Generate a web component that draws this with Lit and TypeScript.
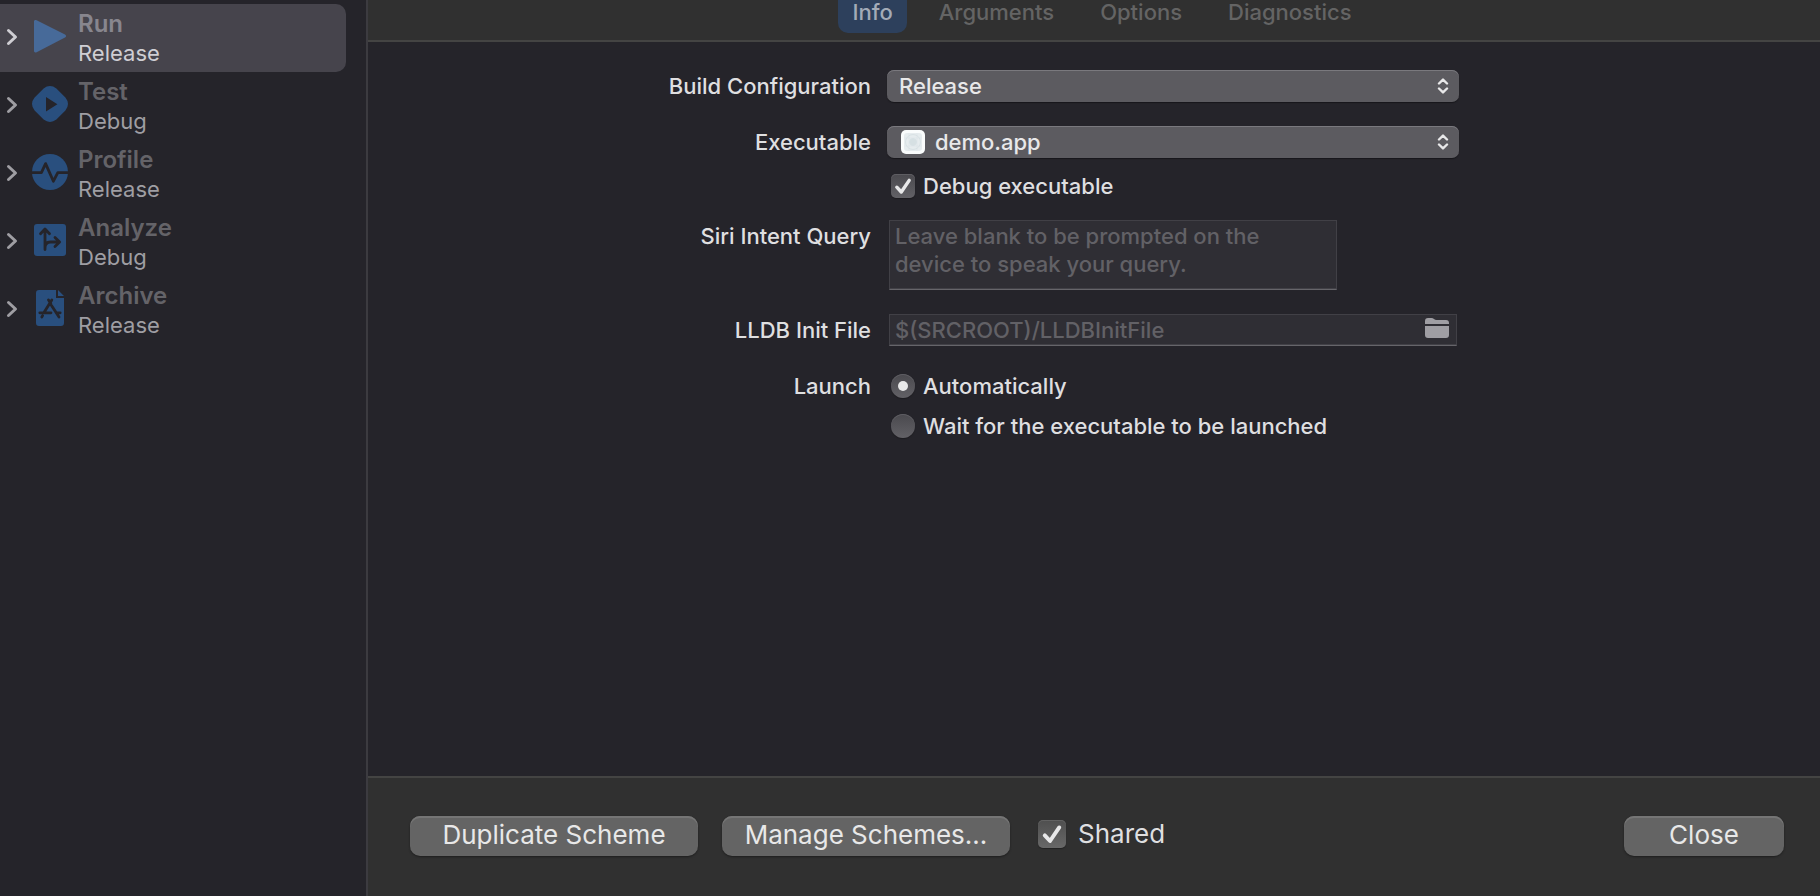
import { LitElement, html, svg, css, type TemplateResult } from "lit";
import { customElement, state } from "lit/decorators.js";
import { classMap } from "lit/directives/class-map.js";

interface SchemeAction {
  name: string;
  config: string;
  icon: TemplateResult;
}

const actions: SchemeAction[] = [
  {
    name: "Run",
    config: "Release",
    icon: svg`<path d="M4 3.6C4 2 5.2 1.5 6.6 2.2L35 16.4C36.4 17.2 36.4 18.8 35 19.6L6.6 34.2C5.2 34.9 4 34.4 4 32.8Z"/>`,
  },
  {
    name: "Test",
    config: "Debug",
    icon: svg`<path fill-rule="evenodd" d="M13.6 2.4Q20 -2.4 26.4 2.4L35.4 11.6Q40.600 18 35.400 24.400L26.400 33.600Q20 38.400 13.600 33.600L4.600 24.400Q-0.600 18 4.600 11.600ZM16 11V25.600L27.400 18.300Z"/>`,
  },
  {
    name: "Profile",
    config: "Release",
    icon: svg`<circle cx="20" cy="18" r="18"/><path class="cut" d="M1 18.600H11.400L15.600 9.600L23.400 27.200L27.800 18.600H39"/>`,
  },
  {
    name: "Analyze",
    config: "Debug",
    icon: svg`<rect x="4" y="2" width="32" height="32" rx="3"/><path class="cut" d="M15 27.500V7.500M10.500 11.800L15 7L19.500 11.800M15 26C15 21.500 17 20 20.500 20H29M25 15.500L29.600 20L25 24.500"/>`,
  },
  {
    name: "Archive",
    config: "Release",
    icon: svg`<path d="M9 0H26V8H34V33Q34 36 31 36H9Q6 36 6 33V3Q6 0 9 0ZM28 0L34 6H28Z"/><path class="cut" d="M18.500 10L20.800 13.600M21.800 10L14 22.500M9.800 22.800H21M26.500 22.800H30.200M21.500 15.500L29 27M12.600 25.600L11.800 27"/>`,
  },
];

const tabs = ["Info", "Arguments", "Options", "Diagnostics"];

const updown = html`<svg class="updown" viewBox="0 0 12 16" aria-hidden="true">
  <path d="M2 5.500L6 1.600L10 5.500M2 10.500L6 14.400L10 10.500" />
</svg>`;

const tick = html`<svg class="tick" viewBox="0 0 24 24" aria-hidden="true">
  <path d="M5.800 13.200L10.300 18L18.200 6.400" />
</svg>`;

@customElement("app-root")
export class AppRoot extends LitElement {
  @state() private action = 0;
  @state() private tab = 0;

  static styles = css`
    :host {
      display: grid;
      grid-template-columns: 368px minmax(0, 1fr);
      min-height: 100vh;
      background: #25242a;
      color: #dfdfe0;
      font: 500 22px/28px Inter, "Liberation Sans", sans-serif;
    }
    *,
    *::before {
      box-sizing: border-box;
    }
    button,
    input,
    select,
    textarea {
      margin: 0;
      padding: 0;
      border: 0;
      border-radius: 0;
      background: none;
      color: inherit;
      font: inherit;
    }
    svg {
      display: block;
    }
    .sidebar {
      border-right: 2px solid #3c3b40;
      padding: 4px 20px 4px 0;
    }
    .list {
      margin: 0;
      padding: 0;
      list-style: none;
    }
    .row {
      display: flex;
      align-items: center;
      width: 100%;
      height: 68px;
      padding: 0 8px 0 6px;
      border-radius: 0 10px 10px 0;
      text-align: left;
      color: #9f9ea3;
    }
    .row.on {
      background: #46444c;
      color: #cfced3;
    }
    .chevron {
      width: 12px;
      height: 18px;
      margin-bottom: 2px;
      fill: none;
      stroke: currentColor;
      stroke-width: 3;
      stroke-linecap: round;
      stroke-linejoin: round;
    }
    .glyph {
      width: 40px;
      height: 36px;
      margin: 0 8px 4px 12px;
      fill: #294f7e;
    }
    .row.on .glyph {
      fill: #476a99;
    }
    .cut {
      fill: none;
      stroke: #25242a;
      stroke-width: 2.8;
      stroke-linecap: round;
      stroke-linejoin: round;
    }
    .name {
      display: block;
      font-size: 24px;
      line-height: 30px;
      font-weight: 600;
      color: #646368;
    }
    .row.on .name {
      color: #88868e;
    }
    .config {
      display: block;
      font-weight: 400;
    }
    .main {
      display: flex;
      flex-direction: column;
      min-width: 0;
    }
    .tabs {
      display: flex;
      justify-content: center;
      gap: 18px;
      height: 42px;
      padding: 0 0 7px 16px;
      border-bottom: 2px solid #444443;
      background: #303030;
    }
    .tab {
      padding: 0 14px 9px;
      border-radius: 0 0 10px 10px;
      line-height: 24px;
      color: #646464;
    }
    .tab.on {
      background: #2d405c;
      color: #a3abb7;
    }
    .form {
      flex: 1;
      display: grid;
      grid-template-columns: 503fr 572fr 345fr;
      align-content: start;
      column-gap: 16px;
      padding-top: 28px;
    }
    .label {
      grid-column: 1;
      text-align: right;
      line-height: 32px;
    }
    .launch {
      line-height: 24px;
    }
    .field {
      grid-column: 2;
      min-width: 0;
    }
    .popup {
      display: grid;
      align-items: center;
      margin-bottom: 24px;
    }
    .popup > * {
      grid-area: 1 / 1;
    }
    .popup select {
      appearance: none;
      width: 100%;
      height: 32px;
      padding: 0 36px 0 12px;
      border-radius: 7px;
      background: #5c5b60;
      box-shadow: inset 0 1px #7a797e, 0 1px 1px #18171b;
      color: #e8e8e9;
    }
    .popup.app {
      margin-bottom: 16px;
    }
    .popup.app select {
      padding-left: 48px;
    }
    .updown {
      justify-self: end;
      width: 12px;
      height: 16px;
      margin-right: 10px;
      fill: none;
      stroke: #e8e8e9;
      stroke-width: 2.4;
      stroke-linecap: round;
      stroke-linejoin: round;
      pointer-events: none;
    }
    .appicon {
      width: 24px;
      height: 24px;
      margin-left: 14px;
      pointer-events: none;
    }
    .check {
      display: flex;
      align-items: center;
      gap: 8px;
      height: 24px;
      margin-left: 4px;
    }
    .box {
      display: grid;
      width: 24px;
      height: 24px;
    }
    .box > * {
      grid-area: 1 / 1;
      width: 100%;
      height: 100%;
    }
    .box input {
      appearance: none;
      border-radius: 5px;
      background: linear-gradient(#4a494e, #626166);
      box-shadow: inset 0 1px #5e5d62, 0 1px 1px #1c1b1f;
    }
    .tick {
      fill: none;
      stroke: #e8e8e9;
      stroke-width: 3.4;
      stroke-linecap: round;
      stroke-linejoin: round;
      pointer-events: none;
      visibility: hidden;
    }
    input:checked + .tick {
      visibility: visible;
    }
    .box input[type="radio"] {
      display: grid;
      place-items: center;
      border-radius: 50%;
    }
    .box input[type="radio"]:checked::before {
      content: "";
      width: 10px;
      height: 10px;
      border-radius: 50%;
      background: #e8e8e9;
    }
    .debug {
      margin-bottom: 22px;
    }
    .entry {
      border: 1px solid #414046;
      border-bottom-color: #66656a;
      background: #2f2e34;
      box-shadow: inset 0 -1px #414046;
    }
    ::placeholder {
      color: #626166;
      opacity: 1;
    }
    .query {
      display: block;
      width: calc(100% - 124px);
      height: 70px;
      margin: 0 0 24px 2px;
      padding: 1px 5px;
      resize: none;
      overflow: hidden;
    }
    .file {
      display: flex;
      align-items: center;
      height: 32px;
      margin: 0 2px 28px;
      padding: 0 7px 0 5px;
    }
    .file input {
      flex: 1;
      min-width: 0;
      height: 28px;
    }
    .folder {
      width: 24px;
      height: 20px;
      margin-bottom: 4px;
      fill: #9f9ea3;
    }
    .radios {
      display: grid;
      gap: 16px;
    }
    .footer {
      display: flex;
      align-items: center;
      gap: 24px;
      height: 120px;
      padding: 0 36px 2px 42px;
      border-top: 2px solid #444443;
      background: #303030;
      font-size: 26px;
      font-weight: 400;
    }
    .push {
      width: 288px;
      height: 40px;
      padding-bottom: 2px;
      border-radius: 10px;
      background: #646464;
      box-shadow: inset 0 2px #757575, 0 1px 2px #1e1e1e;
      color: #e8e8e8;
    }
    .close {
      width: 160px;
      margin-left: auto;
    }
    .shared {
      gap: 12px;
      height: 28px;
      margin-bottom: 4px;
    }
    .shared .box {
      width: 28px;
      height: 28px;
    }
    .shared .box input {
      background: linear-gradient(#4f4f4f, #686868);
      box-shadow: inset 0 1px #626262, 0 1px 1px #222;
    }
  `;

  render() {
    return html`
      <nav class="sidebar" aria-label="Scheme actions">
        <ul class="list">
          ${actions.map(
            (a, i) => html`<li>
              <button
                class=${classMap({ row: true, on: i === this.action })}
                @click=${() => (this.action = i)}
              >
                <svg class="chevron" viewBox="0 0 12 18" aria-hidden="true">
                  <path d="M2.500 2.500L9.500 9L2.500 15.500" />
                </svg>
                <svg class="glyph" viewBox="0 0 40 36" aria-hidden="true">${a.icon}</svg>
                <span>
                  <span class="name">${a.name}</span>
                  <span class="config">${a.config}</span>
                </span>
              </button>
            </li>`
          )}
        </ul>
      </nav>
      <main class="main">
        <div class="tabs" role="tablist">
          ${tabs.map(
            (t, i) => html`<button
              role="tab"
              aria-selected=${i === this.tab}
              class=${classMap({ tab: true, on: i === this.tab })}
              @click=${() => (this.tab = i)}
            >${t}</button>`
          )}
        </div>
        <form class="form">
          <label class="label" for="build">Build Configuration</label>
          <div class="field popup">
            <select id="build">
              <option>Release</option>
              <option>Debug</option>
            </select>
            ${updown}
          </div>

          <label class="label" for="exec">Executable</label>
          <div class="field popup app">
            <select id="exec">
              <option>demo.app</option>
            </select>
            <svg class="appicon" viewBox="0 0 24 24" aria-hidden="true">
              <rect width="24" height="24" rx="5" fill="#fafcfc" />
              <rect x="3" y="3" width="18" height="18" rx="3" fill="#e6ecee" />
              <g fill="none" stroke="#d9e2e5">
                <circle cx="12" cy="12" r="7.500" />
                <circle cx="12" cy="12" r="3.500" fill="#d6e0e3" />
                <path d="M3.500 8H20.500M3.500 16H20.500M8 3.500V20.500M16 3.500V20.500" stroke-opacity=".4" />
              </g>
            </svg>
            ${updown}
          </div>

          <label class="field check debug">
            <span class="box"><input type="checkbox" checked />${tick}</span>
            Debug executable
          </label>

          <label class="label" for="query">Siri Intent Query</label>
          <div class="field">
            <textarea
              id="query"
              class="entry query"
              placeholder="Leave blank to be prompted on the device to speak your query."
            ></textarea>
          </div>

          <label class="label" for="lldb">LLDB Init File</label>
          <div class="field">
            <div class="entry file">
              <input id="lldb" type="text" placeholder="$(SRCROOT)/LLDBInitFile" />
              <button type="button" aria-label="Choose file">
                <svg class="folder" viewBox="0 0 24 20" aria-hidden="true">
                  <path d="M0 6V3Q0 0 3 0H6.500Q8 0 9 1T11.500 2H21Q24 2 24 5V6ZM0 8H24V17Q24 20 21 20H3Q0 20 0 17Z" />
                </svg>
              </button>
            </div>
          </div>

          <span class="label launch" id="launch">Launch</span>
          <div class="field radios" role="radiogroup" aria-labelledby="launch">
            <label class="check">
              <span class="box"><input type="radio" name="launch" checked /></span>
              Automatically
            </label>
            <label class="check">
              <span class="box"><input type="radio" name="launch" /></span>
              Wait for the executable to be launched
            </label>
          </div>
        </form>
        <footer class="footer">
          <button class="push">Duplicate Scheme</button>
          <button class="push">Manage Schemes…</button>
          <label class="check shared">
            <span class="box"><input type="checkbox" checked />${tick}</span>
            Shared
          </label>
          <button class="push close">Close</button>
        </footer>
      </main>
    `;
  }
}
